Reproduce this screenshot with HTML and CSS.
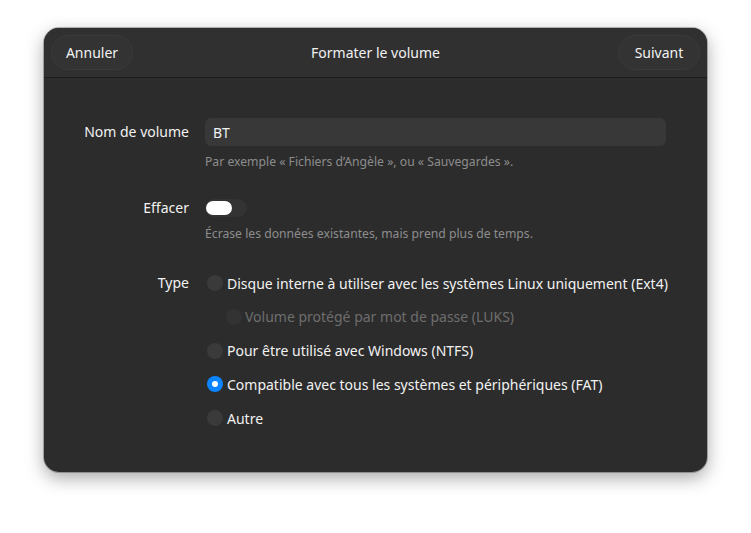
FILE: index.html
```html
<!DOCTYPE html>
<html lang="fr">
<head>
    <meta charset="UTF-8" />
    <meta name="viewport" content="width=device-width, initial-scale=1.0" />
    <link rel="stylesheet" href="styles.css">
    <title>Formater le volume</title>
</head>
<body>
    <div class="dialog">
        <header class="headerbar">
            <button class="pill">Annuler</button>
            <div class="title">Formater le volume</div>
            <button class="pill">Suivant</button>
        </header>

        <div class="content">
            <label class="row-label" for="volname">Nom de volume</label>
            <div class="field">
                <input type="text" id="volname" class="entry" value="BT" />
                <div class="hint">Par exemple « Fichiers d’Angèle », ou « Sauvegardes ».</div>
            </div>

            <div class="row-label">Effacer</div>
            <div class="field">
                <div class="switch"><span class="knob"></span></div>
                <div class="hint">Écrase les données existantes, mais prend plus de temps.</div>
            </div>

            <div class="row-label type-row">Type</div>
            <div class="field options type-row">
                <div class="option"><span class="radio"></span>Disque interne à utiliser avec les systèmes Linux uniquement (Ext4)</div>
                <div class="option sub disabled"><span class="check"></span>Volume protégé par mot de passe (LUKS)</div>
                <div class="option"><span class="radio"></span>Pour être utilisé avec Windows (NTFS)</div>
                <div class="option"><span class="radio checked"></span>Compatible avec tous les systèmes et périphériques (FAT)</div>
                <div class="option"><span class="radio"></span>Autre</div>
            </div>
        </div>
    </div>
</body>
</html>
```

FILE: styles.css
```css
* {
    box-sizing: border-box;
    margin: 0;
    padding: 0;
}
body {
    background-color: #ffffff;
    font-family: "Noto Sans", "DejaVu Sans", sans-serif;
    font-size: 14px;
    color: #f2f2f2;
    width: 751px;
    height: 533px;
    overflow: hidden;
}
.dialog {
    width: 663px;
    height: 444px;
    margin: 28px 0 0 44px;
    background-color: #2c2c2c;
    border-radius: 15px;
    overflow: hidden;
    box-shadow: 0 0 0 1px rgba(0, 0, 0, 0.25), 0 6px 18px rgba(0, 0, 0, 0.35);
}
.headerbar {
    height: 50px;
    display: flex;
    align-items: center;
    justify-content: space-between;
    padding: 0 7px;
    background-color: #303030;
    border-bottom: 1px solid #1c1c1c;
}
.pill {
    width: 82px;
    height: 35px;
    border-radius: 18px;
    border: 1px solid #3b3b3b;
    background-color: #333333;
    color: #f2f2f2;
    font-family: inherit;
    font-size: 14px;
}
.title {
    font-size: 14px;
    font-weight: 400;
}
.content {
    display: grid;
    grid-template-columns: 145px 461px;
    column-gap: 16px;
    row-gap: 24px;
    padding: 40px 0 0 0;
}
.row-label {
    text-align: right;
    line-height: 28px;
}
.field {
    display: flex;
    flex-direction: column;
}
.entry {
    height: 28px;
    border: none;
    border-radius: 6px;
    background-color: #383838;
    color: #f2f2f2;
    font-family: inherit;
    font-size: 14px;
    padding: 0 8px;
    outline: none;
}
.hint {
    margin-top: 7px;
    font-size: 12.2px;
    color: #8c8c8c;
}
.switch {
    width: 42px;
    height: 18px;
    margin-top: 5px;
    margin-bottom: 1px;
    border-radius: 9px;
    background-color: #333333;
    padding: 2px 1px;
}
.knob {
    display: block;
    width: 26px;
    height: 14px;
    border-radius: 7px;
    background-color: #ffffff;
}
.type-row {
    margin-top: 3px;
}
.option {
    display: flex;
    align-items: center;
    gap: 4px;
    height: 28px;
    margin-bottom: 5.75px;
    padding-left: 2px;
    white-space: nowrap;
}
.option.sub {
    padding-left: 21px;
    gap: 3px;
}
.option.disabled {
    color: #6e6e6e;
}
.radio, .check {
    flex: none;
    width: 16px;
    height: 16px;
    border-radius: 50%;
    background-color: #3a3a3a;
}
.check {
    background-color: #333333;
}
.radio.checked {
    background-color: #0a84ff;
    display: flex;
    align-items: center;
    justify-content: center;
}
.radio.checked::after {
    content: "";
    width: 6px;
    height: 6px;
    border-radius: 50%;
    background-color: #ffffff;
}
```
